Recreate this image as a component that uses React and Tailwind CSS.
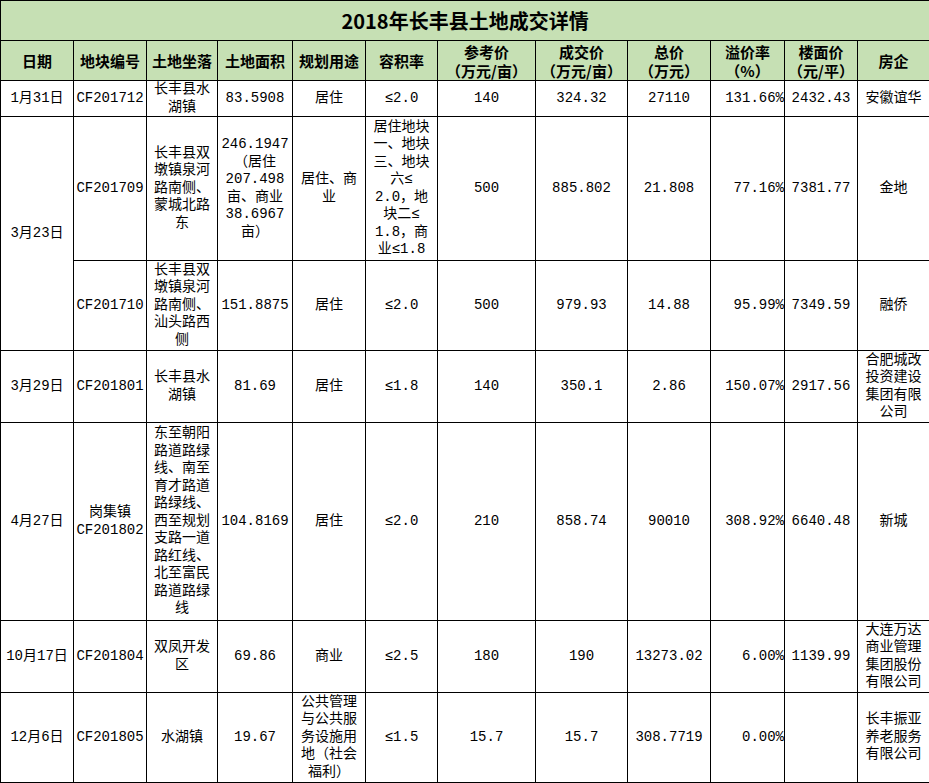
const body = "font-['Liberation_Mono','Noto_Sans_CJK_SC',monospace]";

function Lines({ lines }) {
  return lines.map((l, i) => (
    <div key={i} className="whitespace-nowrap">
      {l}
    </div>
  ));
}

function C({ children, lines, align = "text-center", rowSpan }) {
  return (
    <td
      rowSpan={rowSpan}
      className={`border border-black p-0 align-middle text-[14px] leading-[17.5px] text-black ${align}`}
    >
      {lines ? <Lines lines={lines} /> : <span className="whitespace-nowrap">{children}</span>}
    </td>
  );
}

function H({ lines }) {
  return (
    <th className="border border-black bg-[#c6e0b4] p-0 text-center align-middle text-[15px] font-bold leading-[19px] text-black">
      <Lines lines={lines} />
    </th>
  );
}

export default function App() {
  return (
    <div className={`w-[929px] bg-white ${body}`}>
      <table className="w-[929px] table-fixed border-collapse">
        <colgroup>
          <col className="w-[73px]" />
          <col className="w-[73px]" />
          <col className="w-[71px]" />
          <col className="w-[75px]" />
          <col className="w-[73px]" />
          <col className="w-[72px]" />
          <col className="w-[98px]" />
          <col className="w-[92px]" />
          <col className="w-[83px]" />
          <col className="w-[74px]" />
          <col className="w-[73px]" />
          <col className="w-[72px]" />
        </colgroup>
        <tbody>
          <tr className="h-[40px]">
            <td
              colSpan={12}
              className="border border-black bg-[#c6e0b4] p-0 text-center align-middle font-['Noto_Sans_CJK_SC',sans-serif] text-[20px] font-bold text-black"
            >
              2018年长丰县土地成交详情
            </td>
          </tr>
          <tr className="h-[40px] font-['Noto_Sans_CJK_SC',sans-serif]">
            <H lines={["日期"]} />
            <H lines={["地块编号"]} />
            <H lines={["土地坐落"]} />
            <H lines={["土地面积"]} />
            <H lines={["规划用途"]} />
            <H lines={["容积率"]} />
            <H lines={["参考价", "（万元/亩）"]} />
            <H lines={["成交价", "（万元/亩）"]} />
            <H lines={["总价", "（万元）"]} />
            <H lines={["溢价率", "（%）"]} />
            <H lines={["楼面价", "（元/平）"]} />
            <H lines={["房企"]} />
          </tr>
          <tr className="h-[36px]">
            <C>1月31日</C>
            <C>CF201712</C>
            <C lines={["长丰县水", "湖镇"]} />
            <C>83.5908</C>
            <C>居住</C>
            <C>≤2.0</C>
            <C>140</C>
            <C>324.32</C>
            <C>27110</C>
            <C align="text-right">131.66%</C>
            <C>2432.43</C>
            <C>安徽谊华</C>
          </tr>
          <tr className="h-[144px]">
            <C rowSpan={2}>3月23日</C>
            <C>CF201709</C>
            <C lines={["长丰县双", "墩镇泉河", "路南侧、", "蒙城北路", "东"]} />
            <C lines={["246.1947", "（居住", "207.498", "亩、商业", "38.6967", "亩）"]} />
            <C lines={["居住、商", "业"]} />
            <C lines={["居住地块", "一、地块", "三、地块", "六≤", "2.0，地", "块二≤", "1.8，商", "业≤1.8"]} />
            <C>500</C>
            <C>885.802</C>
            <C>21.808</C>
            <C align="text-right">77.16%</C>
            <C>7381.77</C>
            <C>金地</C>
          </tr>
          <tr className="h-[90px]">
            <C>CF201710</C>
            <C lines={["长丰县双", "墩镇泉河", "路南侧、", "汕头路西", "侧"]} />
            <C>151.8875</C>
            <C>居住</C>
            <C>≤2.0</C>
            <C>500</C>
            <C>979.93</C>
            <C>14.88</C>
            <C align="text-right">95.99%</C>
            <C>7349.59</C>
            <C>融侨</C>
          </tr>
          <tr className="h-[72px]">
            <C>3月29日</C>
            <C>CF201801</C>
            <C lines={["长丰县水", "湖镇"]} />
            <C>81.69</C>
            <C>居住</C>
            <C>≤1.8</C>
            <C>140</C>
            <C>350.1</C>
            <C>2.86</C>
            <C align="text-right">150.07%</C>
            <C>2917.56</C>
            <C lines={["合肥城改", "投资建设", "集团有限", "公司"]} />
          </tr>
          <tr className="h-[198px]">
            <C>4月27日</C>
            <C lines={["岗集镇", "CF201802"]} />
            <C
              lines={[
                "东至朝阳",
                "路道路绿",
                "线、南至",
                "育才路道",
                "路绿线、",
                "西至规划",
                "支路一道",
                "路红线、",
                "北至富民",
                "路道路绿",
                "线",
              ]}
            />
            <C>104.8169</C>
            <C>居住</C>
            <C>≤2.0</C>
            <C>210</C>
            <C>858.74</C>
            <C>90010</C>
            <C align="text-right">308.92%</C>
            <C>6640.48</C>
            <C>新城</C>
          </tr>
          <tr className="h-[72px]">
            <C>10月17日</C>
            <C>CF201804</C>
            <C lines={["双凤开发", "区"]} />
            <C>69.86</C>
            <C>商业</C>
            <C>≤2.5</C>
            <C>180</C>
            <C>190</C>
            <C>13273.02</C>
            <C align="text-right">6.00%</C>
            <C>1139.99</C>
            <C lines={["大连万达", "商业管理", "集团股份", "有限公司"]} />
          </tr>
          <tr className="h-[90px]">
            <C>12月6日</C>
            <C>CF201805</C>
            <C>水湖镇</C>
            <C>19.67</C>
            <C lines={["公共管理", "与公共服", "务设施用", "地（社会", "福利）"]} />
            <C>≤1.5</C>
            <C>15.7</C>
            <C>15.7</C>
            <C>308.7719</C>
            <C align="text-right">0.00%</C>
            <C></C>
            <C lines={["长丰振亚", "养老服务", "有限公司"]} />
          </tr>
        </tbody>
      </table>
    </div>
  );
}
